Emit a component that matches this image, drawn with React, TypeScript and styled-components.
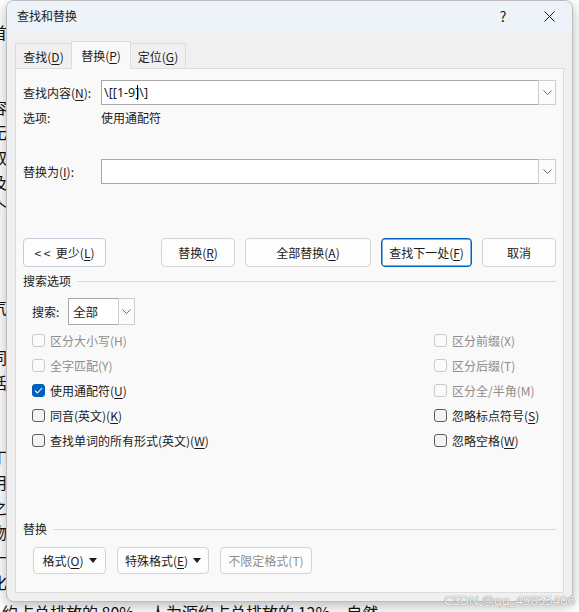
import React from "react";
import styled, { createGlobalStyle, css } from "styled-components";

const GlobalStyle = createGlobalStyle`
  html, body {
    margin: 0;
    padding: 0;
    background: #ffffff;
  }
  body {
    font-family: "Noto Sans CJK SC", "Noto Sans", sans-serif;
  }
  * {
    box-sizing: border-box;
  }
`;

const Desk = styled.div`
  position: relative;
  width: 579px;
  height: 612px;
  overflow: hidden;
  background: #ffffff;
`;

// the Word document behind the dialog
const Doc = styled.div`
  display: flex;
  flex-direction: column;
  padding-top: 20px;
  font-family: "Noto Sans CJK SC", sans-serif;
  font-size: 16px;
  color: #111111;
`;

const GutterLine = styled.div`
  height: 25px;
  line-height: 25px;
  margin-left: -9px;
`;

const DocLine = styled.div`
  height: 25px;
  line-height: 25px;
  margin-top: 5px;
  padding-left: 2px;
  white-space: nowrap;
`;

const Watermark = styled.div`
  position: absolute;
  right: 4px;
  top: 591px;
  font-family: "Noto Sans", sans-serif;
  font-size: 13px;
  color: rgba(255, 255, 255, 0.9);
  text-shadow: 0 0 1px #8a8a8a, 0 0 1px #8a8a8a;
  white-space: nowrap;
`;

const Dialog = styled.div`
  position: absolute;
  left: 6px;
  top: 0;
  width: 567px;
  height: 602px;
  display: flex;
  flex-direction: column;
  background: #f0f0f0;
  border: 1px solid #bcbcbc;
  border-radius: 8px;
  overflow: hidden;
  box-shadow: 0 4px 14px rgba(0, 0, 0, 0.28);
  font-size: 12px;
  color: #1b1b1b;
`;

const TitleBar = styled.div`
  height: 30px;
  display: flex;
  align-items: center;
  padding-left: 10px;
  background: #eef2f9;
`;

const Title = styled.div`
  flex: 1;
  font-size: 12px;
  line-height: 30px;
`;

const CaptionButton = styled.div`
  width: 46px;
  height: 30px;
  display: flex;
  align-items: center;
  justify-content: center;
  font-size: 14px;
  color: #1b1b1b;
`;

const Body = styled.div`
  flex: 1;
  display: flex;
  flex-direction: column;
  padding: 10px 8px 8px 8px;
`;

const Tabs = styled.div`
  display: flex;
  align-items: flex-end;
  height: 27px;
`;

const Tab = styled.div<{ $active?: boolean; $w: number }>`
  width: ${(p) => p.$w}px;
  height: 25px;
  display: flex;
  align-items: center;
  justify-content: center;
  border: 1px solid #dcdcdc;
  border-bottom: none;
  background: #f0f0f0;
  margin-left: -1px;
  &:first-child {
    margin-left: 0;
  }
  ${(p) =>
    p.$active &&
    css`
      height: 28px;
      margin-bottom: -1px;
      background: #f9f9f9;
      position: relative;
      z-index: 1;
    `}
`;

const Panel = styled.div`
  flex: 1;
  display: flex;
  flex-direction: column;
  background: #f9f9f9;
  border: 1px solid #dcdcdc;
  padding: 11px 7px 0 7px;
`;

const FieldRow = styled.div<{ $top?: number }>`
  display: grid;
  grid-template-columns: 78px 1fr;
  align-items: center;
  height: 25px;
  margin-top: ${(p) => p.$top ?? 0}px;
`;

const InfoRow = styled.div`
  display: grid;
  grid-template-columns: 78px 1fr;
  align-items: center;
  height: 14px;
  line-height: 14px;
  margin-top: 6px;
`;

const Key = styled.span`
  text-decoration: underline;
  text-underline-offset: 2px;
`;

const Combo = styled.div`
  height: 25px;
  display: flex;
  align-items: center;
  background: #ffffff;
  border: 1px solid #a8a8a8;
`;

const ComboText = styled.div`
  flex: 1;
  display: flex;
  align-items: center;
  padding-left: 2px;
  font-family: "Noto Sans", "Noto Sans CJK SC", sans-serif;
  font-size: 12.5px;
  white-space: pre;
`;

const Caret = styled.span`
  display: inline-block;
  width: 1px;
  height: 15px;
  margin-left: -2px;
  margin-right: 1px;
  background: #000000;
`;

const DropPart = styled.div<{ $w?: number }>`
  width: ${(p) => p.$w ?? 18}px;
  align-self: stretch;
  display: flex;
  align-items: center;
  justify-content: center;
  background: #fbfbfb;
  border: 1px solid #cdcdcd;
  margin: -1px -1px -1px 0;
`;

const ButtonRow = styled.div`
  display: flex;
  justify-content: space-between;
  align-items: center;
  margin-top: 54px;
`;

const ButtonGroup = styled.div`
  display: flex;
  gap: 10px;
`;

const Button = styled.div<{
  $w: number;
  $h?: number;
  $primary?: boolean;
  $disabled?: boolean;
  $tint?: boolean;
}>`
  width: ${(p) => p.$w}px;
  height: ${(p) => p.$h ?? 29}px;
  display: flex;
  align-items: center;
  justify-content: center;
  background: #fdfdfd;
  border: 1px solid ${(p) => (p.$tint ? "#c3ccd9" : "#d3d3d3")};
  border-radius: 4px;
  white-space: pre;
  color: ${(p) => (p.$disabled ? "#8f8f8f" : "#1b1b1b")};
  ${(p) =>
    p.$primary &&
    css`
      border-color: #0062be;
      box-shadow: inset 0 0 0 0.5px #0062be;
    `}
`;

const ButtonLabel = styled.span``;

const ArrowSlot = styled.span`
  display: flex;
  margin-left: 5px;
`;

const SectionHeader = styled.div<{ $top: number }>`
  display: flex;
  align-items: center;
  gap: 6px;
  height: 14px;
  line-height: 14px;
  margin-top: ${(p) => p.$top}px;
`;

const Rule = styled.div`
  flex: 1;
  height: 1px;
  background: #dadada;
`;

const SearchRow = styled.div`
  display: flex;
  align-items: center;
  height: 27px;
  margin-top: 10px;
  padding-left: 9px;
`;

const SearchLabel = styled.div`
  width: 36px;
`;

const Select = styled.div`
  width: 67px;
  height: 27px;
  display: flex;
  align-items: center;
  background: #ffffff;
  border: 1px solid #a8a8a8;
`;

const SelectText = styled.div`
  flex: 1;
  padding-left: 4px;
  font-size: 12.5px;
`;

const Checks = styled.div`
  display: grid;
  grid-template-columns: 402px 1fr;
  grid-template-rows: repeat(5, 25px);
  grid-auto-flow: column;
  margin-top: 3px;
  padding-left: 9px;
`;

const CheckItem = styled.div<{ $disabled?: boolean }>`
  display: flex;
  align-items: center;
  gap: 5px;
  color: ${(p) => (p.$disabled ? "#8d8d8d" : "#1b1b1b")};
`;

const Box = styled.div<{ $checked?: boolean; $disabled?: boolean }>`
  width: 13px;
  height: 13px;
  display: flex;
  align-items: center;
  justify-content: center;
  border-radius: 3px;
  border: 1px solid ${(p) => (p.$disabled ? "#c9c9c9" : "#5c5c5c")};
  background: ${(p) => (p.$disabled ? "#fbfbfb" : "#f3f3f3")};
  ${(p) =>
    p.$checked &&
    css`
      border-color: #005fb8;
      background: #005fb8;
    `}
`;

const FormatRow = styled.div`
  display: flex;
  gap: 11px;
  margin-top: 11px;
  padding-left: 10px;
`;

const Chevron = () => (
  <svg width="9" height="5" viewBox="0 0 9 5">
    <path d="M0.5 0.5 L4.5 4.5 L8.5 0.5" fill="none" stroke="#606060" strokeWidth="0.9" />
  </svg>
);

const MenuArrow = () => (
  <svg width="8" height="5" viewBox="0 0 8 5">
    <path d="M0 0 H8 L4 5 Z" fill="#1b1b1b" />
  </svg>
);

const CheckMark = () => (
  <svg width="9" height="7" viewBox="0 0 9 7">
    <path d="M1 3.6 L3.4 6 L8 1" fill="none" stroke="#ffffff" strokeWidth="1.1" />
  </svg>
);

const CloseIcon = () => (
  <svg width="11" height="11" viewBox="0 0 11 11">
    <path d="M0.5 0.5 L10.5 10.5 M10.5 0.5 L0.5 10.5" stroke="#1b1b1b" strokeWidth="1" />
  </svg>
);

type CheckDef = { label: React.ReactNode; checked?: boolean; disabled?: boolean };

const checks: CheckDef[] = [
  { label: "区分大小写(H)", disabled: true },
  { label: "全字匹配(Y)", disabled: true },
  { label: <>使用通配符(<Key>U</Key>)</>, checked: true },
  { label: <>同音(英文)(<Key>K</Key>)</> },
  { label: <>查找单词的所有形式(英文)(<Key>W</Key>)</> },
  { label: "区分前缀(X)", disabled: true },
  { label: "区分后缀(T)", disabled: true },
  { label: "区分全/半角(M)", disabled: true },
  { label: <>忽略标点符号(<Key>S</Key>)</> },
  { label: <>忽略空格(<Key>W</Key>)</> },
];

const gutter = [
  "首", "]", "」", "容", "无", "取", "及", "个", "", "", "", "气",
  "，", "同", "话", "", "", "丁", "用", "之", "物", "一", "化",
];

const App = () => {
  return (
    <Desk>
      <GlobalStyle />
      <Doc>
        {gutter.map((c, i) => (
          <GutterLine key={i}>{c}</GutterLine>
        ))}
        <DocLine>约占总排放的 80%，人为源约占总排放的 12%，自然</DocLine>
      </Doc>

      <Dialog>
        <TitleBar>
          <Title>查找和替换</Title>
          <CaptionButton>?</CaptionButton>
          <CaptionButton>
            <CloseIcon />
          </CaptionButton>
        </TitleBar>

        <Body>
          <Tabs>
            <Tab $w={57}>
              <span>
                查找(<Key>D</Key>)
              </span>
            </Tab>
            <Tab $w={60} $active>
              <span>
                替换(<Key>P</Key>)
              </span>
            </Tab>
            <Tab $w={56}>
              <span>
                定位(<Key>G</Key>)
              </span>
            </Tab>
          </Tabs>

          <Panel>
            <FieldRow>
              <span>
                查找内容(<Key>N</Key>):
              </span>
              <Combo>
                <ComboText>
                  {"\\[[1-9]"}
                  <Caret />
                  {"\\]"}
                </ComboText>
                <DropPart>
                  <Chevron />
                </DropPart>
              </Combo>
            </FieldRow>
            <InfoRow>
              <span>选项:</span>
              <span>使用通配符</span>
            </InfoRow>

            <FieldRow $top={34}>
              <span>
                替换为(<Key>I</Key>):
              </span>
              <Combo>
                <ComboText />
                <DropPart>
                  <Chevron />
                </DropPart>
              </Combo>
            </FieldRow>

            <ButtonRow>
              <Button $w={83} $tint>
                <ButtonLabel>
                  {"< <  更少("}
                  <Key>L</Key>)
                </ButtonLabel>
              </Button>
              <ButtonGroup>
                <Button $w={74}>
                  <ButtonLabel>
                    替换(<Key>R</Key>)
                  </ButtonLabel>
                </Button>
                <Button $w={126}>
                  <ButtonLabel>
                    全部替换(<Key>A</Key>)
                  </ButtonLabel>
                </Button>
                <Button $w={91} $primary>
                  <ButtonLabel>
                    查找下一处(<Key>F</Key>)
                  </ButtonLabel>
                </Button>
                <Button $w={74}>
                  <ButtonLabel>取消</ButtonLabel>
                </Button>
              </ButtonGroup>
            </ButtonRow>

            <SectionHeader $top={7}>
              <span>搜索选项</span>
              <Rule />
            </SectionHeader>

            <SearchRow>
              <SearchLabel>搜索:</SearchLabel>
              <Select>
                <SelectText>全部</SelectText>
                <DropPart $w={17}>
                  <Chevron />
                </DropPart>
              </Select>
            </SearchRow>

            <Checks>
              {checks.map((c, i) => (
                <CheckItem key={i} $disabled={c.disabled}>
                  <Box $checked={c.checked} $disabled={c.disabled}>
                    {c.checked && <CheckMark />}
                  </Box>
                  <span>{c.label}</span>
                </CheckItem>
              ))}
            </Checks>

            <SectionHeader $top={69}>
              <span>替换</span>
              <Rule />
            </SectionHeader>

            <FormatRow>
              <Button $w={73} $h={27}>
                <ButtonLabel>
                  格式(<Key>O</Key>)
                </ButtonLabel>
                <ArrowSlot>
                  <MenuArrow />
                </ArrowSlot>
              </Button>
              <Button $w={92} $h={27}>
                <ButtonLabel>
                  特殊格式(<Key>E</Key>)
                </ButtonLabel>
                <ArrowSlot>
                  <MenuArrow />
                </ArrowSlot>
              </Button>
              <Button $w={92} $h={27} $disabled>
                <ButtonLabel>不限定格式(T)</ButtonLabel>
              </Button>
            </FormatRow>
          </Panel>
        </Body>
      </Dialog>

      <Watermark>CSDN @qq_49855406</Watermark>
    </Desk>
  );
};

export default App;
